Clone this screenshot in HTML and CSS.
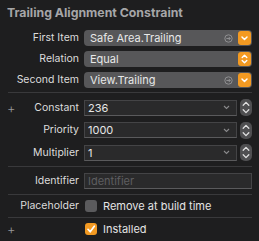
FILE: index.html
```html
<!DOCTYPE html>
<html>
<head>
<meta charset="utf-8">
<link rel="stylesheet" href="styles.css">
</head>
<body>
<div class="panel">
  <div class="title">Trailing Alignment Constraint</div>

  <div class="group g1">
    <div class="row">
      <div class="lab"><span></span><span class="ltext">First Item</span></div>
      <div class="popup">
        <span class="ptext">Safe Area.Trailing</span>
        <svg class="goto" width="9" height="9" viewBox="0 0 9 9"><circle cx="4.5" cy="4.5" r="3.7" fill="none" stroke="#8f8f91" stroke-width="1"/><path d="M2.4 4.5H6.3M4.8 3L6.3 4.5L4.8 6" fill="none" stroke="#8f8f91" stroke-width="1"/></svg>
        <span class="obtn"><svg width="13" height="14" viewBox="0 0 13 14"><path d="M4 6L6.5 8.5L9 6" fill="none" stroke="#fff" stroke-width="1.5" stroke-linecap="round" stroke-linejoin="round"/></svg></span>
      </div>
    </div>
    <div class="row">
      <div class="lab"><span></span><span class="ltext">Relation</span></div>
      <div class="popup">
        <span class="ptext">Equal</span>
        <span class="obtn"><svg width="13" height="14" viewBox="0 0 13 14"><path d="M4.2 5.5L6.5 3.2L8.8 5.5M4.2 8.5L6.5 10.8L8.8 8.5" fill="none" stroke="#fff" stroke-width="1.4" stroke-linecap="round" stroke-linejoin="round"/></svg></span>
      </div>
    </div>
    <div class="row">
      <div class="lab"><span></span><span class="ltext">Second Item</span></div>
      <div class="popup">
        <span class="ptext">View.Trailing</span>
        <svg class="goto" width="9" height="9" viewBox="0 0 9 9"><circle cx="4.5" cy="4.5" r="3.7" fill="none" stroke="#8f8f91" stroke-width="1"/><path d="M2.4 4.5H6.3M4.8 3L6.3 4.5L4.8 6" fill="none" stroke="#8f8f91" stroke-width="1"/></svg>
        <span class="obtn"><svg width="13" height="14" viewBox="0 0 13 14"><path d="M4 6L6.5 8.5L9 6" fill="none" stroke="#fff" stroke-width="1.5" stroke-linecap="round" stroke-linejoin="round"/></svg></span>
      </div>
    </div>
  </div>

  <div class="sep s1"></div>

  <div class="group g2">
    <div class="row">
      <div class="lab"><span class="plus">+</span><span class="ltext">Constant</span></div>
      <div class="combo">
        <div class="field"><span class="ftext">236</span><svg class="fchev" width="7" height="5" viewBox="0 0 7 5"><path d="M1 1L3.5 3.5L6 1" fill="none" stroke="#8a8a8c" stroke-width="1.1"/></svg></div>
        <span class="stepper"><svg width="12" height="17" viewBox="0 0 12 17"><path d="M3.2 6.2L6 3.4L8.8 6.2M3.2 10.8L6 13.6L8.8 10.8" fill="none" stroke="#e0e0e0" stroke-width="1.3" stroke-linecap="round" stroke-linejoin="round"/></svg></span>
      </div>
    </div>
    <div class="row">
      <div class="lab"><span></span><span class="ltext">Priority</span></div>
      <div class="combo">
        <div class="field"><span class="ftext">1000</span><svg class="fchev" width="7" height="5" viewBox="0 0 7 5"><path d="M1 1L3.5 3.5L6 1" fill="none" stroke="#8a8a8c" stroke-width="1.1"/></svg></div>
        <span class="stepper"><svg width="12" height="17" viewBox="0 0 12 17"><path d="M3.2 6.2L6 3.4L8.8 6.2M3.2 10.8L6 13.6L8.8 10.8" fill="none" stroke="#e0e0e0" stroke-width="1.3" stroke-linecap="round" stroke-linejoin="round"/></svg></span>
      </div>
    </div>
    <div class="row">
      <div class="lab"><span></span><span class="ltext">Multiplier</span></div>
      <div class="combo">
        <div class="field"><span class="ftext">1</span><svg class="fchev" width="7" height="5" viewBox="0 0 7 5"><path d="M1 1L3.5 3.5L6 1" fill="none" stroke="#8a8a8c" stroke-width="1.1"/></svg></div>
        <span class="stepper"><svg width="12" height="17" viewBox="0 0 12 17"><path d="M3.2 6.2L6 3.4L8.8 6.2M3.2 10.8L6 13.6L8.8 10.8" fill="none" stroke="#e0e0e0" stroke-width="1.3" stroke-linecap="round" stroke-linejoin="round"/></svg></span>
      </div>
    </div>
  </div>

  <div class="sep s2"></div>

  <div class="row idrow">
    <div class="lab"><span></span><span class="ltext">Identifier</span></div>
    <div class="field wide"><span class="ftext ph">Identifier</span></div>
  </div>

  <div class="sep s3"></div>

  <div class="row crow">
    <div class="lab"><span></span><span class="ltext">Placeholder</span></div>
    <div class="check"><span class="box"></span><span class="ctext">Remove at build time</span></div>
  </div>

  <div class="sep s4"></div>

  <div class="row crow">
    <div class="lab"><span class="plus">+</span><span></span></div>
    <div class="check"><span class="box on"><svg width="12" height="12" viewBox="0 0 12 12"><path d="M3 6.3L5.2 8.8L9.3 3.2" fill="none" stroke="#fff" stroke-width="1.7" stroke-linecap="round" stroke-linejoin="round"/></svg></span><span class="ctext">Installed</span></div>
  </div>
</div>
</body>
</html>
```

FILE: styles.css
```css
html, body {
  margin: 0;
  padding: 0;
  background: #1e1e1f;
}

body {
  font-family: Inter, "Liberation Sans", sans-serif;
  font-size: 11px;
  color: #dedede;
  width: 259px;
  height: 241px;
  overflow: hidden;
}

.panel {
  padding: 0 7px 0 0;
}

.title {
  padding: 5px 0 0 7px;
  height: 25px;
  box-sizing: border-box;
  font-size: 12.3px;
  font-weight: 700;
  color: #a6a6a8;
  line-height: 16px;
}

.group {
  display: flex;
  flex-direction: column;
}

.g1 {
  gap: 5px;
  margin-top: 5px;
}

.g2 {
  gap: 6.5px;
}

.row {
  display: grid;
  grid-template-columns: 79px 1fr;
  column-gap: 5px;
  align-items: center;
}

.g1 .row, .g2 .row {
  height: 16px;
}

.lab {
  display: flex;
  justify-content: space-between;
  align-items: center;
  padding-left: 7px;
  line-height: 14px;
}

.ltext {
  color: #dcdcdc;
  font-size: 10.5px;
  white-space: nowrap;
}

.plus {
  color: #98989a;
  font-size: 13px;
  font-weight: 300;
}

.popup {
  height: 16px;
  background: #575759;
  border-radius: 4px;
  display: flex;
  align-items: center;
  padding: 1px 1px 1px 6px;
  box-sizing: border-box;
}

.ptext {
  flex: 1;
  color: #e8e8e8;
  white-space: nowrap;
  overflow: hidden;
}

.goto {
  margin-right: 5px;
  display: block;
}

.obtn {
  width: 13px;
  height: 14px;
  background: #f39a22;
  border-radius: 3px;
  display: flex;
}

.sep {
  height: 1px;
  background: #39393b;
  margin-left: 8px;
}

.s1 { margin-top: 4px; margin-bottom: 6px; }
.s2 { margin-top: 6px; margin-bottom: 6px; }
.s3 { margin-top: 5px; }

.combo {
  display: flex;
  align-items: center;
  gap: 3px;
}

.field {
  flex: 1;
  height: 16px;
  box-sizing: border-box;
  background: #2a2a2b;
  border: 1px solid #444446;
  border-bottom-color: #5a5a5c;
  display: flex;
  align-items: center;
  padding-left: 3px;
  padding-right: 6px;
}

.ftext {
  flex: 1;
  color: #e6e6e6;
}

.ftext.ph {
  color: #5e5e60;
}

.fchev {
  display: block;
}

.stepper {
  width: 12px;
  height: 17px;
  background: #4f4f51;
  border-radius: 5px;
  display: flex;
}

.idrow {
  height: 16px;
}

.crow {
  height: 22px;
}

.check {
  display: flex;
  align-items: center;
  gap: 6px;
  padding-left: 1px;
}

.box {
  width: 12px;
  height: 12px;
  border-radius: 3px;
  background: #5b5b5d;
  display: flex;
}

.box.on {
  background: #f39a22;
}

.ctext {
  color: #e4e4e4;
  white-space: nowrap;
}
```
